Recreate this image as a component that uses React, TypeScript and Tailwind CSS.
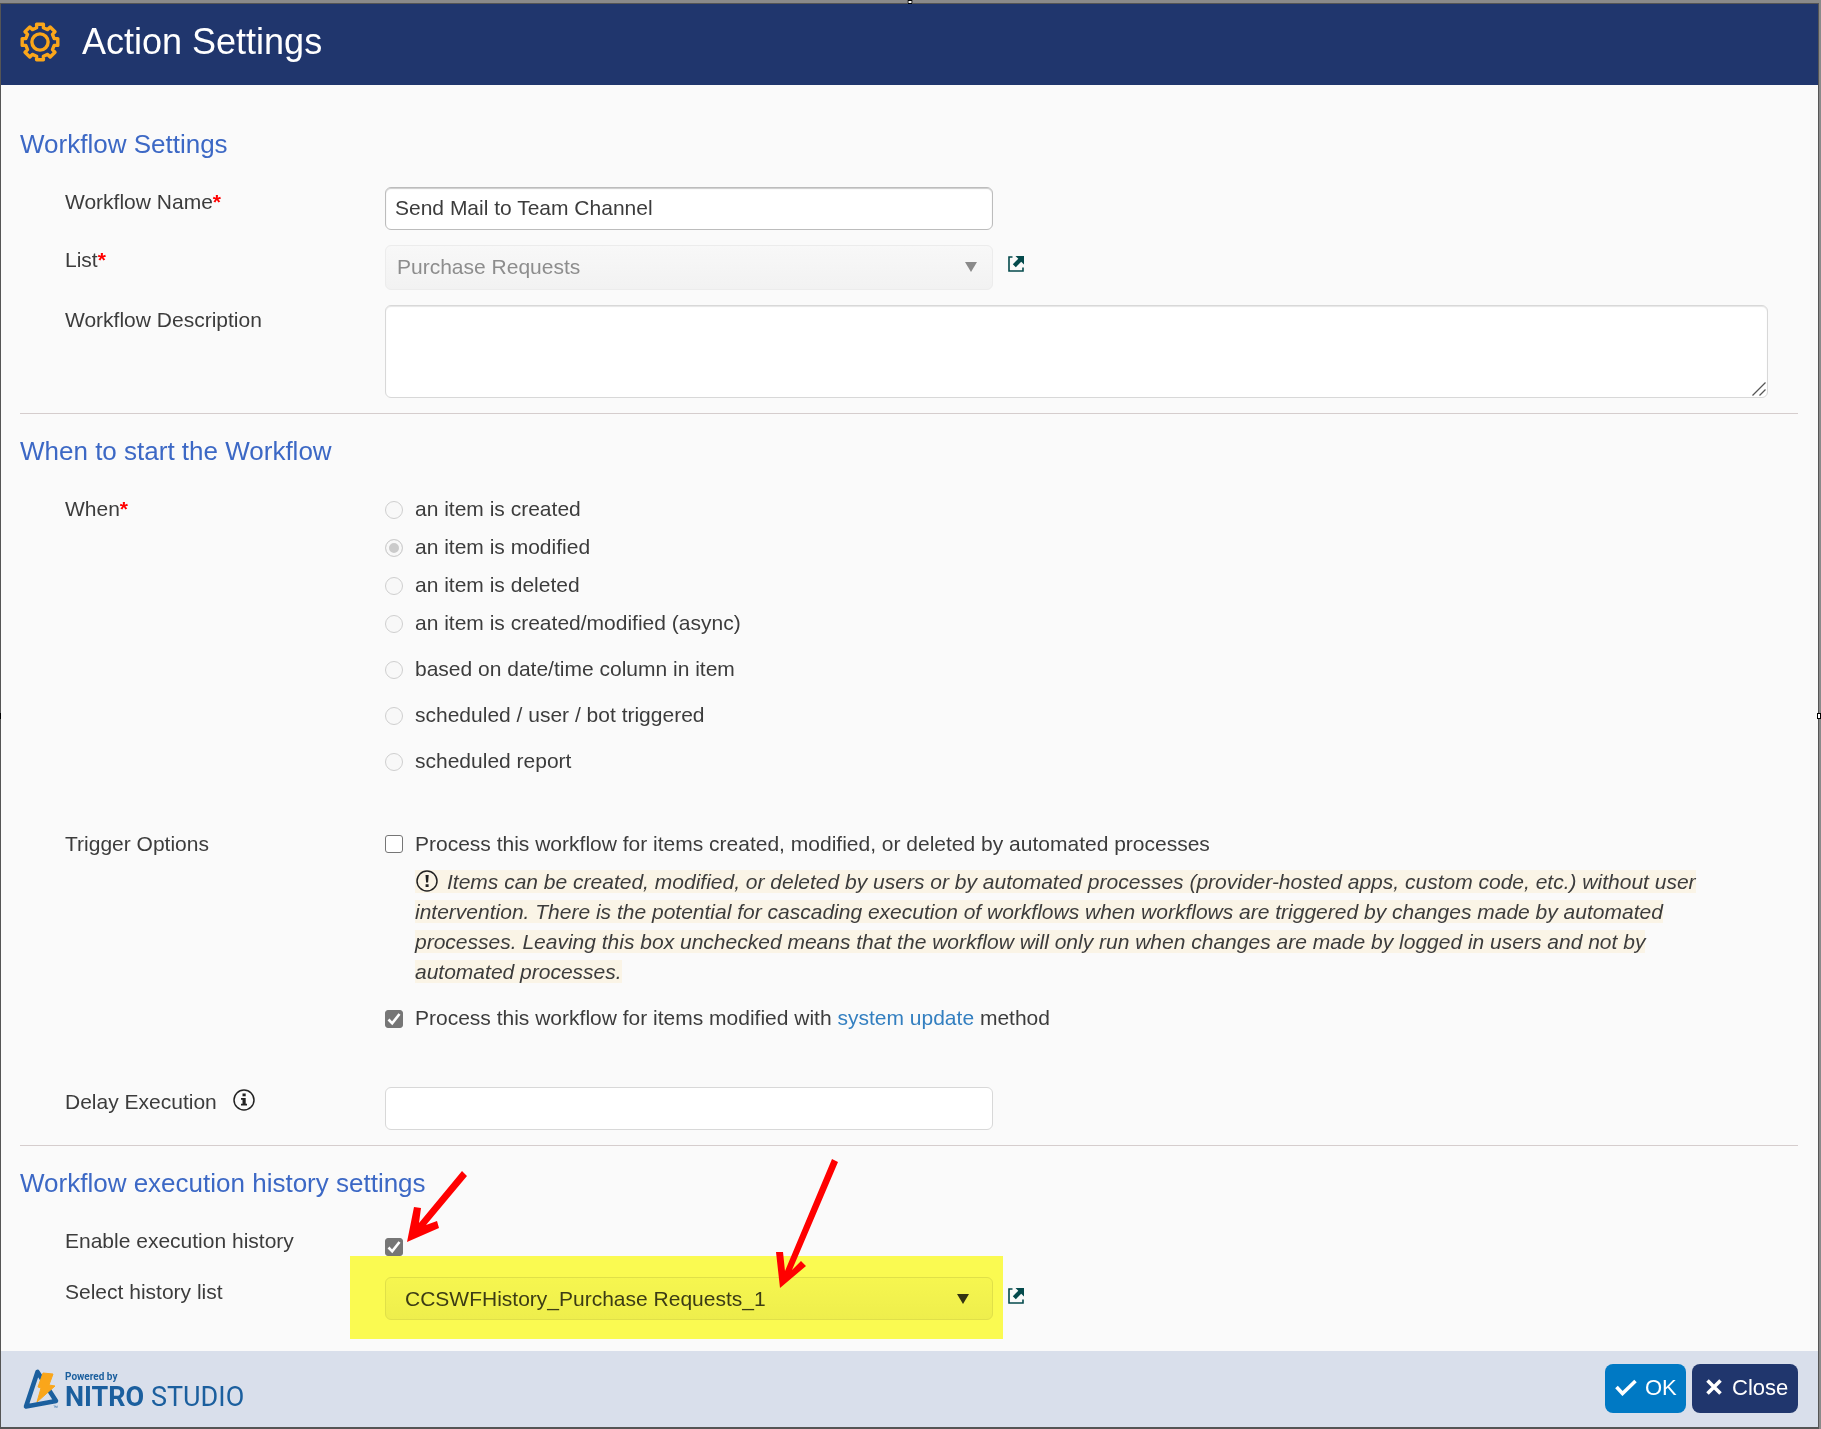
import { useState, type ReactNode } from "react";

const TRIGGERS = [
  { id: "created", label: "an item is created", row: "h-[38px]" },
  { id: "modified", label: "an item is modified", row: "h-[38px]" },
  { id: "deleted", label: "an item is deleted", row: "h-[38px]" },
  { id: "async", label: "an item is created/modified (async)", row: "h-[38px]" },
  { id: "datetime", label: "based on date/time column in item", row: "h-[38px] mt-2" },
  { id: "bot", label: "scheduled / user / bot triggered", row: "h-[38px] mt-2" },
  { id: "report", label: "scheduled report", row: "h-[38px] mt-2" },
];

// Outline of an eight-toothed gear centred on 0,0.
const GEAR_POINTS = Array.from({ length: 8 }, (_, i) => {
  const a = (i * Math.PI) / 4;
  return [
    [-3.4, -14.2],
    [-3.4, -17.8],
    [3.4, -17.8],
    [3.4, -14.2],
  ]
    .map(([x, y]) => `${x * Math.cos(a) - y * Math.sin(a)},${x * Math.sin(a) + y * Math.cos(a)}`)
    .join(" ");
}).join(" ");

function GearIcon() {
  return (
    <svg width="40" height="40" viewBox="-20 -20 40 40" fill="none" stroke="#faa61a" strokeWidth="3.4" strokeLinejoin="round" aria-hidden="true">
      <polygon points={GEAR_POINTS} />
      <circle r="8.1" />
    </svg>
  );
}

function OpenLink({ label }: { label: string }) {
  return (
    <a href="#" aria-label={label} className="block h-4 w-4 text-[#044a4c]">
      <svg width="16" height="16" viewBox="0 0 16 16" fill="none" aria-hidden="true">
        <path d="M4.500 1H1v14h14v-3.500" stroke="currentColor" strokeWidth="1.600" />
        <path d="M7.500 0H16v8.500l-2.800-2.800-5.400 5.600-3-3 5.500-5.500z" fill="currentColor" />
      </svg>
    </a>
  );
}

function Section({ title, children }: { title: string; children: ReactNode }) {
  return (
    <section className="border-b border-[#d5cdcd] pb-[15px] last:border-b-0">
      <h2 className="pt-[22px] pb-7 text-[26px] leading-[30px] text-[#3c68c5]">{title}</h2>
      {children}
    </section>
  );
}

function Field({ label, htmlFor, required, extra, className, children }: {
  label: string;
  htmlFor?: string;
  required?: boolean;
  extra?: ReactNode;
  className?: string;
  children: ReactNode;
}) {
  return (
    <div className={`flex items-start pl-[45px] ${className ?? ""}`}>
      <div className="flex w-[320px] shrink-0 items-center">
        <label htmlFor={htmlFor} className="leading-[30px]">
          {label}
          {required && <span className="font-bold text-[#ff0000]">*</span>}
        </label>
        {extra}
      </div>
      <div className="min-w-0 flex-1">{children}</div>
    </div>
  );
}

function Checkbox({ id, defaultChecked }: { id: string; defaultChecked?: boolean }) {
  return (
    <span className="relative block h-[18px] w-[18px] shrink-0">
      <input
        id={id}
        type="checkbox"
        defaultChecked={defaultChecked}
        className="peer block h-[18px] w-[18px] appearance-none rounded-[3px] border border-[#767676] bg-white checked:bg-[#767676]"
      />
      <svg
        viewBox="0 0 18 18"
        fill="none"
        className="pointer-events-none absolute inset-0 hidden peer-checked:block"
        aria-hidden="true"
      >
        <path d="M3.5 9.5l3.7 3.8L14.5 4" stroke="#fff" strokeWidth="2.6" />
      </svg>
    </span>
  );
}

function Logo() {
  return (
    <div className="flex items-start gap-[6px] text-[#1b5f9e]">
      <svg width="37" height="43" viewBox="0 0 37 43" fill="none" aria-hidden="true">
        <path d="M15.500 5L4 39.500l30-5.500z" stroke="#1b5f9e" strokeWidth="4.600" strokeLinejoin="round" />
        <path d="M21 6l10 1-4 11 6 1-18 16 4-14-3-1z" fill="#faa61a" stroke="#faa61a" strokeWidth="1" strokeLinejoin="round" />
        <text x="31" y="42" fontSize="5" fill="#1b5f9e">™</text>
      </svg>
      <div className="pt-[3px] font-[Roboto,sans-serif]">
        <div className="text-[10px] leading-[14px] font-bold">Powered by</div>
        <div className="text-[27px] leading-[26px] whitespace-nowrap">
          <span className="font-bold">NITRO</span> STUDIO
        </div>
      </div>
    </div>
  );
}

function Arrow({ className, w, h, d }: { className: string; w: number; h: number; d: string }) {
  return (
    <svg width={w} height={h} viewBox={`0 0 ${w} ${h}`} className={`pointer-events-none absolute ${className}`} aria-hidden="true">
      <path d={d} fill="#ff0000" />
    </svg>
  );
}

export default function App() {
  const [when, setWhen] = useState("modified");

  return (
    <div className="relative min-h-screen border-t-[3px] border-r-2 border-[#8a8a8a] bg-[#fafafa] font-['Liberation_Sans',Arial,sans-serif] text-[21px] text-[#3c3c3c]">
      {/* Resize grips of the dialog frame */}
      <span className="absolute top-[-3px] left-1/2 h-1 w-[5px] -translate-x-1/2 border border-black bg-white" />
      <span className="absolute top-1/2 left-0 h-[6px] w-px -translate-y-1/2 bg-black" />
      <span className="absolute top-1/2 right-[-2px] h-[6px] w-1 -translate-y-1/2 border border-black bg-white" />

      <div className="flex min-h-[calc(100vh-3px)] flex-col border border-b-2 border-[#555]">
        <header className="flex h-[81px] items-center gap-[22px] bg-[#20366d] pb-[6px] pl-[19px] text-white">
          <GearIcon />
          <h1 className="text-4xl leading-[42px]">Action Settings</h1>
        </header>

        <main className="flex-1 pt-[22px] pr-5 pl-[19px]">
          <Section title="Workflow Settings">
            <Field label="Workflow Name" htmlFor="name" required>
              <input
                id="name"
                defaultValue="Send Mail to Team Channel"
                className="block h-[43px] w-[608px] rounded-md border border-[#bcbcbc] bg-white px-[9px] pb-[2px] shadow-[inset_0_1px_1px_rgba(0,0,0,0.2)]"
              />
            </Field>
            <Field label="List" htmlFor="list" required className="mt-[15px]">
              <div className="flex items-start gap-[15px]">
                <div className="relative w-[608px]">
                  <select
                    id="list"
                    disabled
                    className="block h-[45px] w-full appearance-none rounded-md border border-[#ececec] bg-linear-to-b from-[#f8f8f8] to-[#f2f2f2] px-[11px] pb-[2px] text-[#8d8d8d] opacity-100"
                  >
                    <option>Purchase Requests</option>
                  </select>
                  <svg width="12" height="10" viewBox="0 0 12 10" className="pointer-events-none absolute top-[17px] right-4" aria-hidden="true">
                    <path d="M0 0h12L6 10z" fill="#8a8a8a" />
                  </svg>
                </div>
                <div className="pt-[11px]">
                  <OpenLink label="Open list" />
                </div>
              </div>
            </Field>
            <Field label="Workflow Description" htmlFor="description" className="mt-[15px]">
              <div className="relative mr-[30px]">
                <textarea
                  id="description"
                  className="block h-[93px] w-full resize-none rounded-md border border-[#d8d8d8] bg-white px-[9px] py-2 shadow-[inset_0_1px_1px_rgba(0,0,0,0.1)]"
                />
                <svg width="14" height="14" viewBox="0 0 14 14" className="pointer-events-none absolute right-[2px] bottom-[2px]" aria-hidden="true">
                  <path d="M.5 13.500l13-13M7.500 13.500l6-6" stroke="#555" strokeWidth="1.300" />
                </svg>
              </div>
            </Field>
          </Section>

          <Section title="When to start the Workflow">
            <Field label="When" required>
              {TRIGGERS.map((t) => (
                <label key={t.id} className={`flex items-start gap-3 ${t.row}`}>
                  <input
                    type="radio"
                    name="when"
                    disabled
                    checked={when === t.id}
                    onChange={() => setWhen(t.id)}
                    className="mt-[7px] h-[18px] w-[18px] appearance-none rounded-full border border-[#cfcfcf] bg-[#f8f8f8] checked:bg-[#cbcbcb] checked:shadow-[inset_0_0_0_3px_#f8f8f8]"
                  />
                  <span className="leading-[30px]">{t.label}</span>
                </label>
              ))}
            </Field>

            <Field label="Trigger Options" className="mt-[45px]">
              <div className="flex gap-3">
                <div className="pt-[6px]">
                  <Checkbox id="automated" />
                </div>
                <label htmlFor="automated" className="leading-[30px]">
                  Process this workflow for items created, modified, or deleted by automated processes
                </label>
              </div>
              <p className="mt-2 mr-14 ml-[30px] leading-[30px] italic">
                <span className="bg-[#faf4e6]">
                  <svg width="24" height="22" viewBox="0 0 24 22" fill="none" className="mr-2 inline-block align-[-3px]" aria-hidden="true">
                    <circle cx="12" cy="11" r="10" stroke="#222" strokeWidth="1.500" />
                    <path d="M10.500 5h3.200l-.6 7.500h-2zM10.600 14.200h3v2.800h-3z" fill="#222" />
                  </svg>
                  Items can be created, modified, or deleted by users or by automated processes (provider-hosted apps, custom code, etc.)
                  without user intervention. There is the potential for cascading execution of workflows when workflows are triggered by
                  changes made by automated processes. Leaving this box unchecked means that the workflow will only run when changes are
                  made by logged in users and not by automated processes.
                </span>
              </p>
              <div className="mt-4 flex gap-3">
                <div className="pt-[7px]">
                  <Checkbox id="system" defaultChecked />
                </div>
                <label htmlFor="system" className="leading-[30px]">
                  Process this workflow for items modified with{" "}
                  <a href="#" className="text-[#337fc0]">
                    system update
                  </a>{" "}
                  method
                </label>
              </div>
            </Field>

            <Field
              label="Delay Execution"
              htmlFor="delay"
              className="mt-[54px]"
              extra={
                <svg width="22" height="22" viewBox="0 0 22 22" fill="none" className="mb-1 ml-4" aria-hidden="true">
                  <circle cx="11" cy="11" r="10" stroke="#222" strokeWidth="1.500" />
                  <path d="M9.500 4.500h3.200v2.800H9.500zM8 9h4.700v5.800H14v1.700H8v-1.700h1.500v-4H8z" fill="#222" />
                </svg>
              }
            >
              <input
                id="delay"
                className="block h-[43px] w-[608px] rounded-md border border-[#d8d8d8] bg-white px-[9px]"
              />
            </Field>
          </Section>

          <Section title="Workflow execution history settings">
            <Field label="Enable execution history" htmlFor="history">
              <div className="relative pt-3">
                <Checkbox id="history" defaultChecked />
                <Arrow className="top-[-56px] left-[21px]" w={62} h={74} d="M1 72L8 37l7 1-2 15L56 1l5 5-41 49 11-4 2 7z" />
              </div>
            </Field>
            <Field label="Select history list" htmlFor="history-list" className="mt-[21px]">
              <div className="relative flex items-start gap-[15px]">
                <div className="relative w-[608px]">
                  <select
                    id="history-list"
                    className="block h-[43px] w-full appearance-none rounded-md border border-[#e0e0e0] bg-linear-to-b from-[#f6f6f6] to-[#eeeeee] px-[19px]"
                  >
                    <option>CCSWFHistory_Purchase Requests_1</option>
                  </select>
                  <svg width="12" height="10" viewBox="0 0 12 10" className="pointer-events-none absolute top-[17px] right-6" aria-hidden="true">
                    <path d="M0 0h12L6 10z" fill="#333" />
                  </svg>
                </div>
                <div className="pt-[11px]">
                  <OpenLink label="Open history list" />
                </div>
                {/* Marker over the history drop-down */}
                <div className="pointer-events-none absolute top-[-21px] left-[-35px] h-[83px] w-[653px] bg-[#ffff52] mix-blend-multiply" />
                <Arrow className="top-[-119px] left-[390px]" w={64} h={132} d="M5 130L1 94h7l2 19L57 1l6 3-46 108 9-9 5 5z" />
              </div>
            </Field>
          </Section>
        </main>

        <footer className="mt-3 flex h-[76px] items-center justify-between bg-[#d9dfeb] pr-5 pb-[2px] pl-[21px]">
          <Logo />
          <div className="flex gap-[6px] text-[22px] text-white">
            <button type="button" className="flex h-[49px] w-[81px] items-center gap-2 rounded-lg bg-[#0079c4] pb-[2px] pl-[10px]">
              <svg width="22" height="17" viewBox="0 0 22 17" fill="none" aria-hidden="true">
                <path d="M1.500 8l6 6.500L20.500 2" stroke="#fff" strokeWidth="3.600" />
              </svg>
              OK
            </button>
            <button type="button" className="flex h-[49px] w-[106px] items-center gap-[10px] rounded-lg bg-[#20366d] pb-[2px] pl-[14px]">
              <svg width="16" height="16" viewBox="0 0 16 16" fill="none" aria-hidden="true">
                <path d="M1.500 1.500l13 13M14.500 1.500l-13 13" stroke="#fff" strokeWidth="3.600" />
              </svg>
              Close
            </button>
          </div>
        </footer>
      </div>
    </div>
  );
}
